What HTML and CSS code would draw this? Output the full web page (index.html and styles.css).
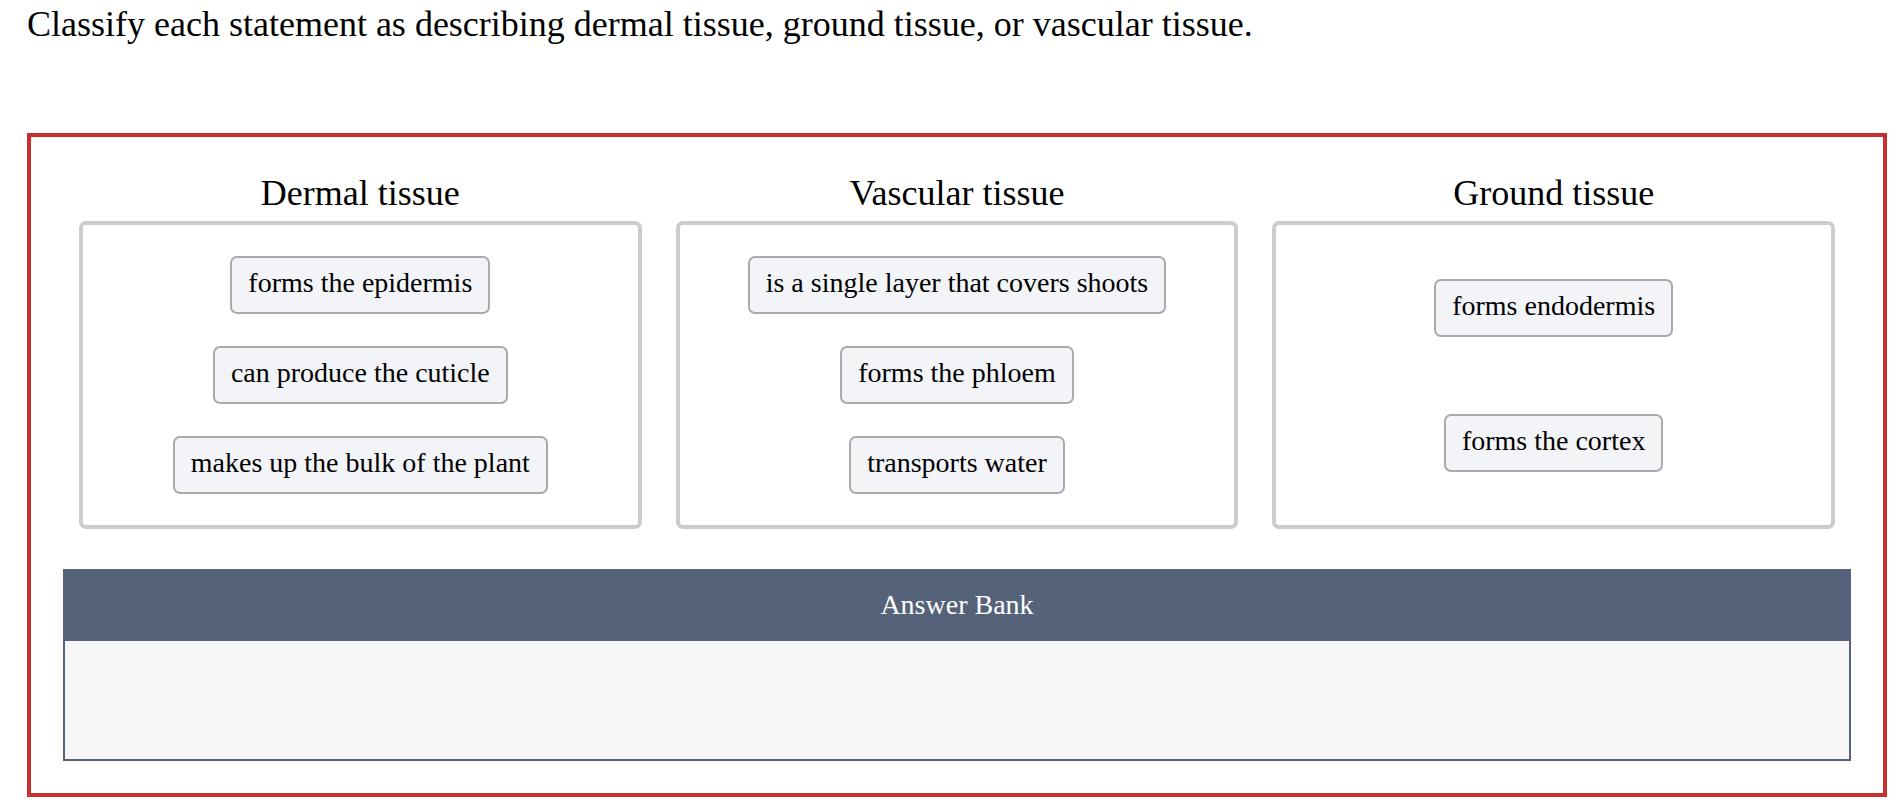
FILE: index.html
```html
<!DOCTYPE html>
<html lang="en">
<head>
<meta charset="utf-8">
<title>Classify tissue</title>
<link rel="stylesheet" href="styles.css">
</head>
<body>
<div class="page">
  <p class="prompt">Classify each statement as describing dermal tissue, ground tissue, or vascular tissue.</p>
  <div class="question">
    <div class="bins">
      <div class="bin">
        <h2 class="bin-title">Dermal tissue</h2>
        <div class="bin-box">
          <div class="chip">forms the epidermis</div>
          <div class="chip">can produce the cuticle</div>
          <div class="chip">makes up the bulk of the plant</div>
        </div>
      </div>
      <div class="bin">
        <h2 class="bin-title">Vascular tissue</h2>
        <div class="bin-box">
          <div class="chip">is a single layer that covers shoots</div>
          <div class="chip">forms the phloem</div>
          <div class="chip">transports water</div>
        </div>
      </div>
      <div class="bin">
        <h2 class="bin-title">Ground tissue</h2>
        <div class="bin-box">
          <div class="chip">forms endodermis</div>
          <div class="chip">forms the cortex</div>
        </div>
      </div>
    </div>
    <div class="bank">
      <div class="bank-header">Answer Bank</div>
      <div class="bank-body"></div>
    </div>
  </div>
</div>
</body>
</html>
```

FILE: styles.css
```css
html, body {
  margin: 0;
  padding: 0;
  background: #ffffff;
}

body {
  font-family: "Liberation Serif", "Times New Roman", serif;
  color: #000000;
}

.page {
  padding: 4px 15px 0 27px;
}

.prompt {
  margin: 0 0 88px 0;
  font-size: 36px;
  line-height: 41px;
}

.question {
  border: 4px solid #c8302f;
  padding: 35px 32px 32px 32px;
}

.bins {
  display: grid;
  grid-template-columns: 1fr 1fr 1fr;
  column-gap: 34px;
  margin: 0 16px;
}

.bin {
  display: flex;
  flex-direction: column;
}

.bin-title {
  margin: 0 0 7px 0;
  font-size: 36px;
  line-height: 42px;
  font-weight: normal;
  text-align: center;
}

.bin-box {
  flex: 1;
  display: flex;
  flex-direction: column;
  align-items: center;
  justify-content: space-around;
  border: 4px solid #cccccc;
  border-radius: 7px;
  padding: 15px 10px;
}

.chip {
  margin: 16px 0;
  padding: 10px 16px 14px 16px;
  font-size: 28px;
  line-height: 30px;
  background: #f3f4f8;
  border: 2px solid #aaaaaa;
  border-radius: 7px;
  white-space: nowrap;
}

.bank {
  margin-top: 40px;
}

.bank-header {
  height: 72px;
  line-height: 72px;
  background: #546379;
  color: #ffffff;
  font-size: 28px;
  text-align: center;
}

.bank-body {
  height: 118px;
  background: #f7f7f7;
  border: 2px solid #546379;
  border-top: none;
}
```
